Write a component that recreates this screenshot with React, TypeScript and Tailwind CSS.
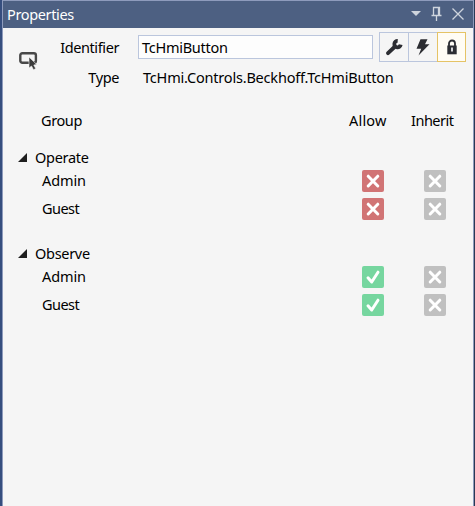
import React from "react";

function Mark({ kind }: { kind: "deny" | "allow" | "none" }) {
  const color = kind === "deny" ? "bg-[#d17475]" : kind === "allow" ? "bg-[#76d69f]" : "bg-[#c0c0c0]";
  return (
    <span className={`block h-[22px] w-[22px] rounded-[2px] ${color}`}>
      <svg width="22" height="22" viewBox="0 0 22 22" fill="none" stroke="#fff" strokeWidth="3" strokeLinecap="round">
        {kind === "allow" ? <path d="M6 11.8 9.7 16 16 6.2" strokeLinejoin="round" /> : <path d="m6.2 6.2 9.6 9.8M15.8 6.2 6.2 16" />}
      </svg>
    </span>
  );
}

function Member({ name, tracking, allowed }: { name: string; tracking: string; allowed: boolean }) {
  return (
    <div className="flex h-7 items-center pl-[39px]">
      <span className={`w-80 pb-[2px] ${tracking}`}>{name}</span>
      <Mark kind={allowed ? "allow" : "deny"} />
      <span className="w-10" />
      <Mark kind="none" />
    </div>
  );
}

function Section({ title, allowed }: { title: string; allowed: boolean }) {
  return (
    <section className="mb-[21px]">
      <div className="flex h-[19px] items-center pl-[15px]">
        <svg width="9" height="9" viewBox="0 0 9 9" className="mr-2"><path d="M9 0v9H0z" fill="#1e1e1e" /></svg>
        <span className="pb-[2px] tracking-[-0.3px]">{title}</span>
      </div>
      <Member name="Admin" tracking="tracking-[-0.1px]" allowed={allowed} />
      <Member name="Guest" tracking="tracking-[-0.55px]" allowed={allowed} />
    </section>
  );
}

export default function App() {
  return (
    <main className="flex h-[506px] w-[475px] overflow-hidden border-r border-l-2 border-r-[#293955] border-l-[#364e7e] bg-[#f5f5f5] font-['Noto_Sans','Open_Sans',sans-serif] text-[14.5px] leading-5 text-black">
      <div className="flex w-full flex-col border-x border-t border-x-[#8e9bbc] border-t-[#8e9bbc]">
        <header className="flex h-[27px] shrink-0 items-center bg-[#4d6082] pl-1 text-white">
          <span className="pb-[2px] tracking-[-0.35px]">Properties</span>
          <svg className="ml-auto" width="62" height="27" viewBox="0 0 62 27" fill="none" stroke="#ced4dd" strokeWidth="1.3">
            <path d="M0 10h10l-5 5z" fill="#ced4dd" stroke="none" />
            <path d="M22.5 14V6.5h6V14M20.5 14.5h10M25.5 15v5M27.5 7v7" />
            <path d="m41.5 7.5 11 11M52.5 7.5l-11 11" />
          </svg>
        </header>
        <div className="flex h-[66px] shrink-0">
          <div className="w-[41px] pt-[23px] pl-4">
            <svg width="20" height="19" viewBox="0 0 20 19">
              <rect x="1.3" y="2.2" width="15.6" height="9.6" rx="2" fill="none" stroke="#484848" strokeWidth="2.4" />
              <path d="M10 6v11l2.5-2 2 3.7 2.2-1.1-1.9-3.6 2.9-.5z" fill="#3b3b3b" stroke="#f5f5f5" strokeWidth=".6" />
            </svg>
          </div>
          <div className="w-[75px] pt-[9px] text-right">
            <div className="tracking-[-0.4px]">Identifier</div>
            <div className="mt-[10px] tracking-[-0.4px]">Type</div>
          </div>
          <div className="ml-[19px] w-[235px] pt-[7px]">
            <div className="flex h-6 items-center border border-[#bbc6dd] bg-[#fdfdfd] pl-[3px] tracking-[-0.27px]">TcHmiButton</div>
            <div className="mt-2 pl-[5px] whitespace-nowrap tracking-[-0.2px]">TcHmi.Controls.Beckhoff.TcHmiButton</div>
          </div>
          <div className="ml-[6px] flex h-[34px] pt-1">
            <span className="flex h-[30px] w-[30px] items-center justify-center border border-[#bbc6dd]">
              <svg width="18" height="18" viewBox="0 0 18 18" fill="none" stroke="#2c2d32" strokeLinecap="round">
                <path d="m3 15.2 6.5-6.2" strokeWidth="3.9" />
                <path d="M12.7 2.9a3.2 3.2 0 1 0 3 3.7" strokeWidth="3.8" strokeLinecap="butt" />
              </svg>
            </span>
            <span className="-ml-px flex h-[30px] w-[30px] items-center justify-center border border-[#bbc6dd]">
              <svg width="18" height="18" viewBox="0 0 18 18"><path d="M6.5 1.2h7L11 6.2h4.5L4.5 17.5 7.2 10.8H2.5z" fill="#2c2d32" /></svg>
            </span>
            <span className="-ml-px flex h-[30px] w-[29px] items-center justify-center border border-[#e5c365] bg-[#fffcf4] outline outline-[0.5px] -outline-offset-1 outline-[#e5c365]">
              <svg width="12" height="16" viewBox="0 0 12 16">
                <path d="M3 7V4.5a3 3 0 0 1 6 0V7" fill="none" stroke="#2c2d32" strokeWidth="1.8" />
                <path d="M1.3 6.5h9.4v8.8H1.3z" fill="#2c2d32" />
                <path d="M5.2 8.5h1.6v4H5.2z" fill="#fff" />
              </svg>
            </span>
          </div>
        </div>
        <div className="mt-4 mb-[18px] flex h-5 shrink-0 pl-[38px]">
          <span className="w-[308px] tracking-[-0.4px]">Group</span>
          <span className="w-[62px] tracking-[0.2px]">Allow</span>
          <span className="tracking-[-0.5px]">Inherit</span>
        </div>
        <Section title="Operate" allowed={false} />
        <Section title="Observe" allowed={true} />
      </div>
    </main>
  );
}
